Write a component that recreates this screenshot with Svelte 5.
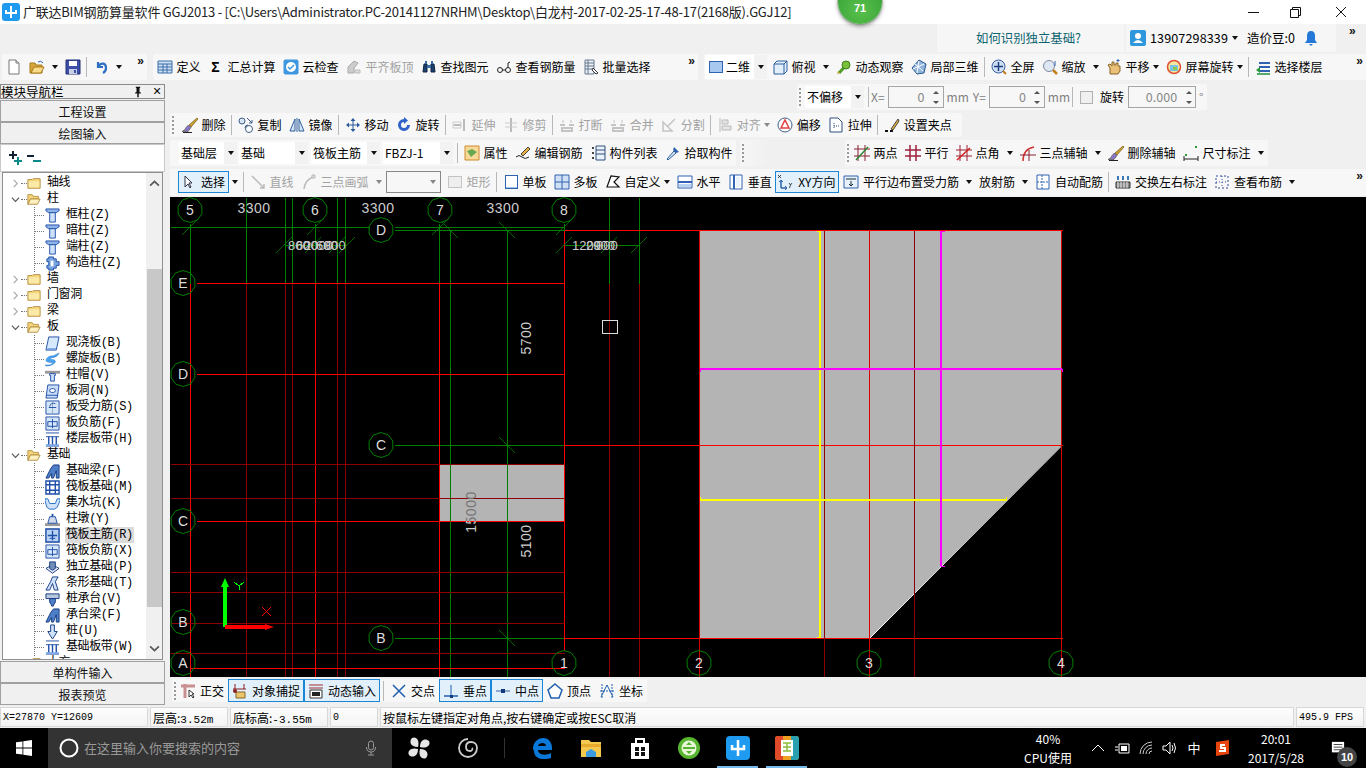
<script>
const I = {
 new:`<path d="M3 1h7l3 3v11H3z" fill="#fff" stroke="#777"/><path d="M10 1v3h3" fill="#ddd" stroke="#777"/>`,
 open:`<path d="M1 4h5l1 2h6v8H1z" fill="#d9a63a" stroke="#a67a1d"/><path d="M2 14l3-6h10l-3 6z" fill="#f8dc8a" stroke="#a67a1d"/><path d="M9 3q3-2 5 1" fill="none" stroke="#2a66b8"/>`,
 save:`<path d="M1 1h14v14H1z" fill="#3d4fa8" stroke="#22306e"/><path d="M4 2h8v5H4z" fill="#fff"/><path d="M4 10h8v5H4z" fill="#c8d0e8"/><path d="M9 11h2v3H9z" fill="#3d4fa8"/>`,
 undo:`<path d="M5 3v5h5M5.500 7.500C8 3 13 4 13 9c0 2-1 4-3 5" fill="none" stroke="#2f6fc4" stroke-width="2.200"/>`,
 def:`<path d="M1 2h14v12H1z" fill="#cfe0f5" stroke="#3a6ea8"/><path d="M1 5h14M1 8h14M1 11h14M6 5v9M10 5v9" stroke="#3a6ea8" fill="none"/>`,
 cloud:`<rect x="0.500" y="0.500" width="15" height="15" rx="2" fill="#3f97e0"/><circle cx="8" cy="8" r="5" fill="#fff"/><path d="M5 8l2 2 4-4" fill="none" stroke="#3f97e0" stroke-width="1.500"/>`,
 flat:`<path d="M2 14V8l6-6 4 2-4 5v5z" fill="#ccc" stroke="#aaa"/><path d="M9 14v-3h5v3z" fill="#ddd" stroke="#bbb"/>`,
 binoc:`<path d="M2 13l1-8h3v8zM10 13V5h3l1 8z" fill="#1d3f6e" stroke="#0f2440"/><path d="M4 2h2v3H4zM10 2h2v3h-2zM6 6h4v3H6z" fill="#3b6ea5"/>`,
 glass:`<circle cx="4" cy="11" r="2.500" fill="none" stroke="#222"/><circle cx="12" cy="11" r="2.500" fill="none" stroke="#222"/><path d="M6.500 11h3M12 8.500V4l2-1" fill="none" stroke="#222"/>`,
 batch:`<path d="M2 1h9v14H2z" fill="#eef2f8" stroke="#67788f"/><path d="M2 4h9M2 7h9M2 10h9M5 1v14" stroke="#67788f"/><path d="M10 9l5 5-2 1-4-4z" fill="#fff" stroke="#333"/>`,
 d2:`<rect x="1.500" y="2.500" width="13" height="11" fill="#a9c8f0" stroke="#2f62b0"/>`,
 top:`<path d="M2 5l3-3h10v10l-3 3H2z" fill="#e2eefa" stroke="#2f5f9e"/><path d="M2 5h10v10M12 5l3-3" fill="none" stroke="#2f5f9e"/>`,
 orbit:`<path d="M3 14L13 3" stroke="#4d9e25" stroke-width="3"/><circle cx="10" cy="6" r="4" fill="#79c13a" stroke="#3d7f1a"/><path d="M1 15l3-1-2-2z" fill="#c8a030"/>`,
 local3:`<path d="M8 1l7 4-2 9-7 1-5-6z" fill="#8fb4dd" stroke="#2d5b8f"/><path d="M4 5l8 7M8 2l-2 12M13 5L2 10" stroke="#fff"/>`,
 full:`<circle cx="7.500" cy="7.500" r="6.500" fill="#cfe0f5" stroke="#3a5f9e"/><path d="M7.500 3v9M3 7.500h9" stroke="#1d3f7e" stroke-width="1.500"/><path d="M12 12l3 3" stroke="#c08020" stroke-width="2"/>`,
 zoom:`<circle cx="7" cy="7" r="5.500" fill="#dfe8f2" stroke="#7d8aa0"/><path d="M11 11l4 4" stroke="#c08020" stroke-width="2.500"/><path d="M13 2v5" stroke="#2f62b0"/>`,
 pan:`<path d="M4 15V9L2 6l2-1 2 2V3h2v3h2V4h2v3h2v5l-2 3z" fill="#e8c078" stroke="#8a6428"/><path d="M12 0v3M10.500 1.500h3" stroke="#2f62b0"/>`,
 rot:`<circle cx="8" cy="8" r="6.500" fill="#f3e6a0" stroke="#e05030" stroke-width="1.500"/><path d="M4 6h8v6H4z" fill="#7cc3e8"/><path d="M7 8h4v3H7z" fill="#8cc850"/>`,
 floor:`<path d="M4 4h11M4 8h11M4 12h11" stroke="#2f62b0" stroke-width="2"/><path d="M1 11l4-3v6z" fill="#2a9a3a"/><path d="M2 15h13" stroke="#1f8f3f" stroke-width="1.500"/>`,
 del:`<path d="M15 1l1 1-7 8-2-2z" fill="#c8a030" stroke="#7a5a18" stroke-width=".700"/><path d="M6.500 8l2.500 2.500-3 4H0q4-2 4-4z" fill="#8a74c8" stroke="#554" stroke-width=".700"/><path d="M1 15.500h9" stroke="#222"/>`,
 copy:`<circle cx="4" cy="4" r="3" fill="#d9e6f4" stroke="#3f5f8a"/><circle cx="11" cy="12" r="3.500" fill="#fff" stroke="#3f5f8a"/><path d="M7 11a3 3 0 0 1 3-3" fill="none" stroke="#3f5f8a"/><path d="M9 1l5 5M14 3v3h-3" fill="none" stroke="#3f5f8a"/>`,
 mirror:`<path d="M6 2v12H1zM10 2v12h5z" fill="#d6e6f7" stroke="#2f5f9e"/><path d="M8 1v14" stroke="#2f5f9e"/>`,
 move:`<path d="M8 1l2.500 3H8.500v3.500H12V5.500L15 8l-3 2.500v-2H8.500V12h2L8 15l-2.500-3h2V8.500H4v2L1 8l3-2.500v2h3.500V4h-2z" fill="#2a5a9a"/>`,
 rotate:`<path d="M8 2a6 6 0 1 0 6 6h-3a3 3 0 1 1-3-3v2l4-3.500L8 0z" fill="#2f62c8"/>`,
 ext:`<path d="M12 2v12M2 8h7" stroke="#bbb" stroke-width="2" fill="none"/><path d="M1 5h8v6H1z" fill="none" stroke="#ccc"/>`,
 trim:`<path d="M8 1v14" stroke="#bbb" stroke-width="2"/><path d="M2 6h12M2 10h12" stroke="#ccc"/>`,
 brk:`<path d="M1 8h5M10 8h5M3 11h10v3H3z" stroke="#c4c4c4" fill="none" stroke-width="2"/><path d="M4 3v3M12 3v3" stroke="#c4c4c4"/>`,
 split:`<path d="M2 14V5l9 9zM14 2l-8 8" fill="none" stroke="#c4c4c4" stroke-width="1.500"/>`,
 align:`<path d="M3 1v14" stroke="#bbb"/><path d="M5 3h6v4H5zM5 9h9v4H5z" fill="#e4e4e4" stroke="#bbb"/>`,
 offs:`<circle cx="8" cy="8" r="7" fill="#fff" stroke="#3f5f8a"/><path d="M8 3l4 8H4z" fill="#fff" stroke="#e04040" stroke-width="1.500"/>`,
 stretch:`<path d="M2 1h8l4 4v10H2z" fill="#fff" stroke="#2f4f7a"/><path d="M6 6v6M6 9h6" stroke="#2f4f7a" stroke-dasharray="1 1"/>`,
 grip2:`<path d="M1 14h3M6 14h3" stroke="#111" stroke-width="2"/><path d="M7 12L14 2l1 2-6 9z" fill="#e8b040" stroke="#444"/>`,
 attr:`<path d="M1 1h14v14H1z" fill="#f9d99a" stroke="#d08a28"/><path d="M3 6l4 6 6-5-5-3z" fill="#6aa84f"/>`,
 edit:`<path d="M1 12q3-3 6 0t7 0" fill="none" stroke="#222"/><path d="M6 9l7-7 2 2-7 7z" fill="#e8b040" stroke="#444"/>`,
 list:`<path d="M2 2h2v2H2zM2 7h2v2H2zM2 12h2v2H2z" fill="#444"/><path d="M6 1h9v14H6z" fill="#eaf2fb" stroke="#2f4f7a"/><path d="M6 5h9M6 9h9" stroke="#2f4f7a"/>`,
 pick:`<path d="M9 6l-7 8 1 1 8-7z" fill="#dbe8f7" stroke="#2f5f9e"/><path d="M9 2l5 5-3 1-3-3z" fill="#2f62b0"/>`,
 two:`<path d="M0 4h16M0 11h16M4 0v16M11 0v16" stroke="#8a2030" /><path d="M2 15L14 2" stroke="#2a8a3a" stroke-width="1.500"/>`,
 para:`<path d="M0 5h16M0 11h16M5 0v16M11 0v16" stroke="#a02040" stroke-width="1.500"/>`,
 angle:`<path d="M0 5h16M0 11h16M4 0v16M11 0v16" stroke="#9a2030"/><path d="M1 15L14 3" stroke="#d02020" stroke-width="1.500"/>`,
 arc3:`<path d="M3 16Q3 4 14 2" fill="none" stroke="#d03030" stroke-width="1.500"/><path d="M0 10h16M9 5v11" stroke="#8a2030"/>`,
 dim:`<path d="M1 14h14M1 11v5M15 11v5" stroke="#222"/><path d="M2 9h2v2H2zM12 1h2v2h-2z" fill="#2a9a3a"/>`,
 sel:`<path d="M5 2v11l3-3 2 4 1-1-2-4h3z" fill="#fff" stroke="#334"/>`,
 line:`<path d="M2 2l12 12M14 10v4h-4" fill="none" stroke="#bbb" stroke-width="1.500"/>`,
 arc:`<path d="M3 15Q4 6 12 3" fill="none" stroke="#bbb" stroke-width="1.500"/><path d="M11 1h3v3h-3z" fill="#ddd" stroke="#bbb"/>`,
 rect:`<rect x="1.500" y="2.500" width="13" height="11" fill="#eee" stroke="#c4c4c4"/>`,
 one:`<rect x="2.500" y="1.500" width="12" height="13" fill="#fff" stroke="#2f62b0"/><path d="M3 13h11v1H3z" fill="#9ec2ee"/>`,
 multi:`<path d="M1 1h14v14H1z" fill="#cfe0f5" stroke="#2f62b0"/><path d="M8 1v14M1 8h14" stroke="#2f62b0"/>`,
 cust:`<path d="M2 13L6 2l8 1-5 5 5 5z" fill="#fff" stroke="#111" stroke-width="1.200"/>`,
 horiz:`<path d="M1 2h14v12H1z" fill="#fff" stroke="#2f62b0"/><path d="M1 8h14" stroke="#2f62b0" stroke-width="2"/><path d="M2 10h12v3H2z" fill="#b8d2f2"/>`,
 vert:`<path d="M2 1h12v14H2z" fill="#fff" stroke="#2f62b0"/><path d="M6 1v14" stroke="#2f62b0" stroke-width="2"/><path d="M8 3h4v10H8z" fill="#eaf2fb"/>`,
 xy:`<path d="M4 7v7M4 14h6" stroke="#2f62b0" stroke-width="1.500"/><path d="M2 8l2-2 2 2M8 12l2 2-2 2" fill="none" stroke="#2f62b0"/><path d="M1 1l3 3M4 1L1 4M12 9l1.500 2L15 9M13.500 11l-1 3" fill="none" stroke="#222" stroke-width=".800"/>`,
 pedge:`<path d="M1 2h14v12H1z" fill="#e8f0fa" stroke="#2f62b0"/><path d="M3 5h10M8 7v5M6 10l2 2 2-2" fill="none" stroke="#133" />`,
 auto:`<path d="M2 1h12v14H2z" fill="#fff" stroke="#2f62b0"/><path d="M7 1v14M2 8h12" stroke="#2f62b0" stroke-dasharray="2 1"/>`,
 swap:`<path d="M2 2h2v4H2zM7 2h2v4H7zM12 2h2v4h-2z" fill="#3a7ab8"/><path d="M1 8h14v6H1z" fill="#8a8a8a" stroke="#333"/><path d="M3 8v6M6 8v6M9 8v6M12 8v6" stroke="#eee"/>`,
 view:`<path d="M2 2h12v12H2z" fill="none" stroke="#334a9a" stroke-dasharray="2 2"/><path d="M8 2v12M2 8h12" stroke="#334a9a" stroke-dasharray="1 2"/>`,
 ortho:`<path d="M1 3h14" stroke="#c89090" stroke-width="3"/><path d="M5 1v14" stroke="#c89090" stroke-width="3"/><path d="M9 7v7l2-2 2 3 1-1-2-3h2z" fill="#fff" stroke="#333"/>`,
 snap:`<path d="M3 1v5M12 1v5M1 6h13" stroke="#8a2020"/><path d="M4 9h9v6H4z" fill="#e8c66a" stroke="#8a6428"/><circle cx="3" cy="8" r="2" fill="#8a2020"/>`,
 dyn:`<path d="M1 2h14M1 5h14" stroke="#a03030"/><path d="M2 7h12v8H2z" fill="#fff" stroke="#333"/><path d="M4 9h8v4H4z" fill="#222"/>`,
 cross:`<path d="M2 2l12 12M14 2L2 14" stroke="#1f5fb0" stroke-width="1.500"/>`,
 perp:`<path d="M1 13h14" stroke="#1f5fb0" stroke-width="1.500"/><path d="M8 2v11" stroke="#1f5fb0"/><path d="M7 12h3v3H7z" fill="#123a80"/>`,
 mid:`<path d="M1 8h14" stroke="#6f8fb8" stroke-width="1.500"/><path d="M6 6h4v4H6z" fill="#123a80"/>`,
 vtx:`<path d="M8 1l7 6-3 8H4L1 7z" fill="#fff" stroke="#1f5fb0" stroke-width="1.500"/>`,
 coord:`<path d="M3 1v14M13 1v14M1 8h14" stroke="#1f5fb0" stroke-dasharray="2 1"/><path d="M8 2l-6 12M8 2l6 12" stroke="#1f5fb0"/>`,
 pin:`<path d="M5 1h6v1l-1 1v5l2 1v1H9v5H7v-5H4V9l2-1V3L5 2z" fill="#111"/>`,
 plus:`<path d="M5 1h2v3h3v2H7v3H5V6H2V4h3z" fill="#123"/><path d="M10 7h2v3h3v2h-3v3h-2v-3H7v-2h3z" fill="#0a8a8a"/>`,
 minus:`<path d="M1 5h7v2H1z" fill="#123"/><path d="M7 10h8v2H7z" fill="#0a8a8a"/>`,
 fclosed:`<path d="M1 4h5l1-1h8v11H1z" fill="#f6d67a" stroke="#b08a3a"/><path d="M2 6h12v7H2z" fill="#fbe9a8"/>`,
 fopen:`<path d="M1 3h5l1 2h6v3H4l-3 6z" fill="#f6d67a" stroke="#b08a3a"/><path d="M1 14l3-6h11l-3 6z" fill="#fdf0bf" stroke="#b08a3a"/>`,
 pil:`<path d="M1 1h14v2l-3 2H4L1 3z" fill="#8fb4e8" stroke="#1f4fa8"/><path d="M5 5h6v10H5z" fill="#cfe2fa" stroke="#1f4fa8"/>`,
 gear:`<path d="M4 1h5v2h3v3h3v4h-3v3H9v2H4v-2H2v-3h2V6H2V3h2z" fill="#7aa5e0" stroke="#1f4fa8"/><path d="M6 5h3v6H6z" fill="#fff"/>`,
 slab:`<path d="M4 1h11l-3 14H1z" fill="#d6e8fb" stroke="#1f4fa8"/><path d="M3 13h9l-.500 2H1.500z" fill="#6f9de0"/>`,
 spiral:`<path d="M1 9q1-5 8-5l6-3q-2 5-8 5-3 1 1 2 5 1 2 4-3 3-9 3l-1-1q8 0 8-2 1-1-4-1-3-1-3-2z" fill="#4aa3f0" stroke="#1f6fc8" stroke-width=".500"/>`,
 cap:`<path d="M0 3h16v3H0z" fill="#999"/><path d="M5 6h6v2h-1v6H6V8H5z" fill="#cfe2fa" stroke="#1f4fa8"/>`,
 hole:`<path d="M3 1h12l-2 14H1z" fill="#c9dcf7" stroke="#1f4fa8"/><rect x="5" y="5" width="6" height="4" rx="2" fill="#fff" stroke="#1f4fa8"/><path d="M2 12h12" stroke="#1f4fa8"/>`,
 gridc:`<path d="M1 1h14v14H1z" fill="#d6e6f9" stroke="#1f4fa8"/><path d="M8 1v14" stroke="#9ab" /><path d="M4 8h8M11 4a4 4 0 0 0-6 3" fill="none" stroke="#1f4fa8"/>`,
 gridn:`<path d="M1 1h14v14H1z" fill="#d6e6f9" stroke="#1f4fa8"/><path d="M8 3v10M3 6h10v5H3z" fill="none" stroke="#1f4fa8"/>`,
 band:`<path d="M1 1h14M1 15h14M1 5h14" stroke="#1f4fa8"/><path d="M4 5v10M8 5v10M12 5v10" stroke="#1f4fa8" stroke-width="1.500"/><path d="M1 13h14v2H1z" fill="#7fa8e8"/>`,
 beam:`<path d="M1 15l5-10 3-4h6v14h-3V7l-3 8H7V10l-3 5z" fill="#4f7fc8" stroke="#123a80"/>`,
 raft:`<path d="M1 1h14v14H1z" fill="#fff" stroke="#1f4fa8" stroke-width="1.500"/><path d="M1 5h14M1 11h14M5 1v14M11 1v14" stroke="#1f4fa8" stroke-width="1.500"/>`,
 pit:`<path d="M0 3h3l2 5h6l2-5h3v2l-3 7-3 2H5l-3-2-2-7z" fill="#cfe2fa" stroke="#1f6fc8"/>`,
 pier:`<path d="M0 12h16v3H0z" fill="#999"/><path d="M5 5h6l2 7H3z" fill="#cfd9e8" stroke="#1f4fa8"/><path d="M7 2h2v3H7z" fill="#1f4fa8"/>`,
 raftm:`<path d="M1 1h14v14H1z" fill="#b9d2f3" stroke="#1f4fa8" stroke-width="1.500"/><path d="M8 3v10M3 8h10" stroke="#1f4fa8" stroke-width="1.500"/><path d="M5 11h6" stroke="#1f4fa8"/>`,
 iso:`<path d="M1 9l7-4 7 4-7 5z" fill="#eef" stroke="#123a80"/><path d="M5 2h6v7l-3 2-3-2z" fill="#6f8fb8" stroke="#123a80"/>`,
 strip:`<path d="M1 15l5-9 2-5h6l-3 5 3 9H10L8 8l-3 7z" fill="#cfe2fa" stroke="#123a80"/>`,
 pcap:`<path d="M1 2h14v5H1z" fill="#b9c8dd" stroke="#123a80"/><path d="M5 7h6v4l-2 3v1H7v-1l-2-3z" fill="#4f7fc8" stroke="#123a80"/>`,
 pile:`<path d="M6 1h4v7h3l-3 5-2 3-2-3-3-5h3z" fill="#cfe2fa" stroke="#123a80"/>`
};
const f = (i,t='',o='') => ({i,t,o});
const bar1 = [f('new'),f('open','', 'd'),f('save')];
const bar2 = [f('def','定义'),f('Σ','汇总计算'),f('cloud','云检查'),f('flat','平齐板顶','x'),f('binoc','查找图元'),f('glass','查看钢筋量'),f('batch','批量选择')];
const bar3 = [f('top','俯视','d'),f('orbit','动态观察'),f('local3','局部三维'),'|',f('full','全屏'),f('zoom','缩放','d'),f('pan','平移','dk'),f('rot','屏幕旋转','dk'),'|',f('floor','选择楼层')];
const edit = [f('del','删除'),'|',f('copy','复制'),f('mirror','镜像'),'|',f('move','移动'),f('rotate','旋转'),'|',f('ext','延伸','x'),f('trim','修剪','x'),'|',f('brk','打断','x'),f('brk','合并','x'),f('split','分割','x'),'|',f('align','对齐','xdk'),f('offs','偏移'),f('stretch','拉伸'),'|',f('grip2','设置夹点')];
const props = [f('attr','属性'),f('edit','编辑钢筋'),f('list','构件列表'),f('pick','拾取构件')];
const axes = [f('two','两点'),f('para','平行'),f('angle','点角','d'),f('arc3','三点辅轴','d'),f('del','删除辅轴'),f('dim','尺寸标注','d')];
const draw1 = [f('line','直线','x'),f('arc','三点画弧','xd')];
const draw2 = [f('one','单板'),f('multi','多板'),f('cust','自定义','dk'),f('horiz','水平'),f('vert','垂直'),f('xy','XY方向','s'),f('pedge','平行边布置受力筋','d'),f('','放射筋','d'),f('auto','自动配筋'),'|',f('swap','交换左右标注'),f('view','查看布筋','d')];
const snaps = [f('ortho','正交'),f('snap','对象捕捉','s'),f('dyn','动态输入','s'),'|',f('cross','交点'),f('perp','垂点','s'),f('mid','中点','s'),f('vtx','顶点'),f('coord','坐标')];
const tree = [
 ['c','轴线'],['o','柱'],['pil','框柱(Z)'],['pil','暗柱(Z)'],['pil','端柱(Z)'],['gear','构造柱(Z)'],['c','墙'],['c','门窗洞'],['c','梁'],['o','板'],
 ['slab','现浇板(B)'],['spiral','螺旋板(B)'],['cap','柱帽(V)'],['hole','板洞(N)'],['gridc','板受力筋(S)'],['gridn','板负筋(F)'],['band','楼层板带(H)'],
 ['o','基础'],['beam','基础梁(F)'],['raft','筏板基础(M)'],['pit','集水坑(K)'],['pier','柱墩(Y)'],['raftm','筏板主筋(R)','s'],['gridn','筏板负筋(X)'],['iso','独立基础(P)'],['strip','条形基础(T)'],['pcap','桩承台(V)'],['beam','承台梁(F)'],['pile','桩(U)'],['band','基础板带(W)'],['c','土方']
];
const BR='#f00', DR='#8c0000', GR='#008000';
const L = [];
const v=(x,a,b,c)=>L.push([x,a,x,b,c]); const h=(y,a,b,c)=>L.push([a,y,b,y,c]);
[[190,223],[246,197],[285,197],[292,197],[315,223],[337,197],[345,197],[439,223],[609,197],[639,197]].forEach(([x,a])=>v(x,a,283,GR));
v(564,223,230,GR); v(450,230,677,GR); v(507,230,677,GR);
h(227,170,369,GR); h(227,394,564,GR); h(230,394,564,GR); h(245,285,345,GR); h(245,564,639,GR); h(445,394,564,GR); h(638,394,564,GR);
[246,285,292,337,345,609,639].forEach(x=>v(x,283,677,DR));
[190,315,439].forEach(x=>v(x,283,677,BR)); v(564,230,650,BR);
[[283,196],[374,196],[521,196],[668,190]].forEach(([y,a])=>h(y,a,564,BR));
[464,498,572,592,623,653].forEach(y=>h(y,170,564,DR));
h(230,564,1062,BR); h(445,564,1062,BR); h(638,564,1062,BR);
[699,869,1061].forEach(x=>v(x,230,677,'#d80000')); [824,914].forEach(x=>v(x,230,677,DR));
const T=[[190,227,1],[315,227,1],[440,227,1],[564,227,1],[450,230,-1],[507,230,-1],[507,445,-1],[507,638,-1],[284,245,1],[313,245,1],[337,245,1],[347,245,1],[564,245,1],[609,245,1],[639,245,1]];
const C=[[190,210,'5'],[315,210,'6'],[440,210,'7'],[564,210,'8'],[381,230,'D'],[183,283,'E'],[183,374,'D'],[183,521,'C'],[183,622,'B'],[183,663,'A'],[381,445,'C'],[381,638,'B'],[564,663,'1'],[699,663,'2'],[869,663,'3'],[1061,663,'4']];
const poly=(x,y)=>Array.from({length:10},(_,i)=>{const a=i*Math.PI/5+.3;return `${(x+12.5*Math.cos(a)).toFixed(1)},${(y+12.5*Math.sin(a)).toFixed(1)}`}).join(' ');
const dims=[[254,213,'3300'],[378,213,'3300'],[503,213,'3300']];
const over=[[288,'800'],[296,'600'],[304,'2000'],[316,'600'],[324,'800'],[572,'1200'],[586,'2900'],[596,'000']];
</script>

{#snippet ic(name, cls='')}
 {#if name==='Σ'}<b class="sig">Σ</b>
 {:else if name}<svg class={'ico '+cls} viewBox="0 0 16 16">{@html I[name]}</svg>{/if}
{/snippet}
{#snippet tool(it)}
 {#if it==='|'}<span class="sep"></span>
 {:else}
 <div class="tool" class:dis={it.o.includes('x')} class:sel={it.o.includes('s')} class:tight={it.o.includes('k')}>
  {@render ic(it.i)}
  {#if it.t}<span class="lbl">{it.t}</span>{/if}
  {#if it.o.includes('d')}<i class="drop"></i>{/if}
 </div>
 {/if}
{/snippet}
{#snippet spin(val, cls)}
 <div class={'spin '+cls}><span>{val}</span><div class="updown"><i class="up"></i><i class="down"></i></div></div>
{/snippet}
{#snippet combo(t, cls)}
 <div class={'combo '+cls}><span>{t}</span><div class="cbtn"><i class="drop"></i></div></div>
{/snippet}

<div class="app">
 <header class="title">
  <svg class="logo" viewBox="0 0 18 18"><rect width="18" height="18" rx="3" fill="#1e9af0"/><path d="M9 3v12M4 7v3h4M14 7v3h-4" fill="none" stroke="#fff" stroke-width="2"/></svg>
  <span class="ttext">广联达BIM钢筋算量软件 GGJ2013 - [C:\Users\Administrator.PC-20141127NRHM\Desktop\白龙村-2017-02-25-17-48-17(2168版).GGJ12]</span>
  <div class="winctl">
   <svg viewBox="0 0 46 20"><path d="M22 10.500h11" stroke="#111"/></svg>
   <svg viewBox="0 0 46 20"><path d="M18.500 7.500h8v8h-8zM20.500 7.500v-2h8v8h-2" fill="none" stroke="#111"/></svg>
   <svg viewBox="0 0 46 20"><path d="M18 5l10 10M28 5L18 15" stroke="#111"/></svg>
  </div>
 </header>
 <div class="badge">71</div>

 <div class="inforow">
  <div class="ask">如何识别独立基础?</div>
  <div class="user">
   <svg class="ico" viewBox="0 0 16 16"><rect width="16" height="16" rx="2" fill="#2f97dc"/><circle cx="8" cy="6" r="3" fill="#fff"/><path d="M3 13q5-6 10 0z" fill="#fff"/></svg>
   <span class="phone">13907298339</span><i class="drop"></i><span class="dou">造价豆:0</span>
   <svg class="ico bell" viewBox="0 0 16 16"><path d="M8 1q4 0 4 5v4l2 3H2l2-3V6q0-5 4-5z" fill="#2479d8"/><path d="M6 14h4l-2 2z" fill="#2479d8"/></svg>
  </div>
  <b class="more">»</b>
 </div>

 <div class="row1">
  <div class="bar b1">
   {@render tool(bar1[0])}{@render tool(bar1[1])}{@render tool(bar1[2])}<span class="sep"></span>{@render tool(f('undo','','d'))}<b class="more">»</b>
  </div>
  <div class="bar b2">
   {#each bar2 as it}{@render tool(it)}{/each}<b class="more">»</b>
  </div>
  <div class="bar b3">
   <div class="combo d2box"><div class="tool">{@render ic('d2')}<span class="lbl">二维</span></div><div class="cbtn"><i class="drop"></i></div></div>
   {#each bar3 as it}{@render tool(it)}{/each}<b class="more">»</b>
  </div>
 </div>

 <div class="main">
  <aside class="side">
   <div class="navhead"><span>模块导航栏</span><div class="navctl">{@render ic('pin','pin')}<span class="navx">×</span></div></div>
   <button class="navbtn">工程设置</button>
   <button class="navbtn">绘图输入</button>
   <div class="treetools">{@render ic('plus')}{@render ic('minus')}</div>
   <div class="treebox">
    <div class="tree">
     {#each tree as [k,t,s]}
      {#if k==='c'||k==='o'}
       <div class="node top">
        <svg class="chev" viewBox="0 0 10 10"><path d={k==='c'?'M3 1l4 4-4 4':'M1 3l4 4 4-4'} fill="none" stroke={k==='c'?'#aaa':'#555'} stroke-width="1.300"/></svg>
        <span class="dots d1"></span>{@render ic(k==='c'?'fclosed':'fopen')}<span class="tl">{t}</span>
       </div>
      {:else}
       <div class="node leaf" class:cur={s}><span class="dots d2"></span>{@render ic(k)}<span class="tl">{t}</span></div>
      {/if}
     {/each}
    </div>
    <div class="scroll">
     <svg class="sa" viewBox="0 0 10 10"><path d="M1 7l4-4 4 4" fill="none" stroke="#555" stroke-width="1.500"/></svg>
     <div class="thumb"></div>
     <svg class="sa" viewBox="0 0 10 10"><path d="M1 3l4 4 4-4" fill="none" stroke="#555" stroke-width="1.500"/></svg>
    </div>
   </div>
   <button class="navbtn nb2">单构件输入</button>
   <button class="navbtn">报表预览</button>
  </aside>

  <section class="work">
   <div class="offsetrow">
    <div class="bar offs">
     <span class="grip"></span>
     {@render combo('不偏移','c-off')}
     <span class="sep"></span>
     <span class="dimlbl x1">X=</span>{@render spin('0','s1')}<span class="dimlbl">mm</span>
     <span class="dimlbl y1">Y=</span>{@render spin('0','s1')}<span class="dimlbl">mm</span>
     <span class="sep"></span><span class="chk"></span><span class="rot">旋转</span>
     {@render spin('0.000','s2')}<span class="dimlbl">°</span>
    </div>
   </div>
   <div class="bar editrow"><span class="grip"></span>{#each edit as it}{@render tool(it)}{/each}</div>
   <div class="comborow">
    <div class="bar cb1">
     {@render combo('基础层','c1')}{@render combo('基础','c2')}{@render combo('筏板主筋','c3')}{@render combo('FBZJ-1','c4')}
     <span class="sep"></span>{#each props as it}{@render tool(it)}{/each}
    </div>
    <div class="bar blank"><span class="grip"></span></div>
    <div class="bar cb2"><span class="grip"></span>{#each axes as it}{@render tool(it)}{/each}</div>
   </div>
   <div class="bar drawrow">
    {@render tool(f('sel','选择','s'))}<i class="drop sd"></i><span class="sep"></span>
    {#each draw1 as it}{@render tool(it)}{/each}
    <div class="dbox"><i class="drop grey"></i></div>
    {@render tool(f('rect','矩形','x'))}<span class="sep"></span>
    {#each draw2 as it}{@render tool(it)}{/each}
    <b class="more">»</b>
   </div>

   <svg class="canvas" viewBox="170 197 1196 480">
    <defs><linearGradient id="tg" gradientUnits="userSpaceOnUse" x1="0" y1="0" x2="48" y2="0"><stop offset="0.3125" stop-color="#ccc"/><stop offset="0.3125" stop-color="#757575"/></linearGradient></defs>
    <rect x="170" y="197" width="1196" height="480" fill="#000"/>
    <polygon points="699,230 1061,230 1061,446 870,638 699,638" fill="#b4b4b4"/>
    <rect x="439" y="464" width="125" height="57" fill="#b4b4b4"/>
    <path d="M1061 446.500L870 638" stroke="#fff"/>
    <g class="crisp">
     {#each L as [a,b,c,d,col]}<line x1={a+.5} y1={b+.5} x2={c+.5} y2={d+.5} stroke={col}/>{/each}
     <path d="M820 231v407M700 500h307" stroke="#ff0" fill="none" stroke-width="2"/>
     <path d="M817 231.500h3M817 637.500h3M700.500 497v3M1006.500 497v3" stroke="#ff0" fill="none"/>
     <path d="M700 369h362M941 231v335" stroke="#f0f" fill="none" stroke-width="2"/>
     <path d="M941 231.500h4M941 566.500h4M700.500 369v3M1062.500 369v3" stroke="#f0f" fill="none"/>
     <path d="M602.500 320.500h15v13h-15z" fill="none" stroke="#ddd"/>
    </g>
    {#each T as [x,y,s]}<line x1={x-8} y1={y+8*s} x2={x+8} y2={y-8*s} stroke={GR} stroke-width=".8"/>{/each}
    {#each C as [x,y,t]}<polygon points={poly(x,y)} fill="none" stroke={GR}/><text class="ct" x={x} y={y+5}>{t}</text>{/each}
    {#each dims as [x,y,t]}<text class="dt" x={x} y={y}>{t}</text>{/each}
    {#each over as [x,t]}<text class="ot" x={x} y="250">{t}</text>{/each}
    <text class="dt" transform="translate(531 338) rotate(-90)">5700</text>
    <text class="dt" transform="translate(531 541) rotate(-90)">5100</text>
    <text class="dt mid" transform="translate(476 512) rotate(-90) translate(-24 0)" x="24">15000</text>
    <path d="M225 578l4 9h-2v40h-4v-40h-2z" fill="#0f0"/>
    <path d="M225 625h40v-1l9 3-9 3v-1h-40z" fill="#f00"/>
    <g class="crisp">
     <path d="M234 582l5 4 5-4M239 586v4" fill="none" stroke="#0f0"/>
     <path d="M262 607l9 9M271 607l-9 9" stroke="#f00"/>
    </g>
   </svg>

   <div class="snaprow"><div class="bar snapbar"><span class="grip"></span>{#each snaps as it}{@render tool(it)}{/each}</div></div>
  </section>
 </div>

 <footer class="status">
  <div class="st s-a mono">X=27870 Y=12609</div>
  <div class="st s-b">层高:<span class="mono m2">3.52m</span></div>
  <div class="st s-c">底标高:<span class="mono m2">-3.55m</span></div>
  <div class="st s-d mono">0</div>
  <div class="st s-e">按鼠标左键指定对角点,按右键确定或按ESC取消</div>
  <div class="st s-f mono">495.9 FPS</div>
 </footer>

 <nav class="task">
  <div class="start"><svg viewBox="0 0 16 16"><path d="M0 2.300l6.500-.9v6.200H0zM7.300 1.300L16 0v7.600H7.300zM0 8.400h6.500v6.200L0 13.700zM7.300 8.400H16V16l-8.700-1.200z" fill="#fff"/></svg></div>
  <div class="search">
   <svg class="cortana" viewBox="0 0 20 20"><circle cx="10" cy="10" r="8.500" fill="none" stroke="#fff" stroke-width="2"/></svg>
   <span>在这里输入你要搜索的内容</span>
   <svg class="mic" viewBox="0 0 16 16"><rect x="5.500" y="1" width="5" height="9" rx="2.500" fill="none" stroke="#999"/><path d="M3.500 7q0 5 4.500 5t4.500-5M8 12v3M5 15h6" fill="none" stroke="#999"/></svg>
  </div>
  <div class="cell"><svg viewBox="0 0 24 24"><path d="M11 11C3 11 2 5 5 2c4-2 8 2 6 9zM13 11c0-8 6-9 9-6 2 4-2 8-9 6zM13 13c8 0 9 6 6 9-4 2-8-2-6-9zM11 13c0 8-6 9-9 6-2-4 2-8 9-6z" fill="#e6e6e6"/></svg></div>
  <div class="cell"><svg viewBox="0 0 24 24"><path d="M12 3a9 9 0 1 0 9 9c0-4-3-6-6-6s-5 2-5 5 2 4 4 4 3-2 2-3" fill="none" stroke="#ccc" stroke-width="1.800"/></svg></div>
  <span class="tsep"></span>
  <div class="cell"><svg viewBox="0 0 24 24"><path d="M3 13C3 6 8 2 13 2c6 0 9 5 9 10v2H8c0 5 8 6 13 3v5c-6 2-17 2-17-7zM8 10h8c0-4-7-4-8 0z" fill="#0a78d8"/></svg></div>
  <div class="cell"><svg viewBox="0 0 24 24"><path d="M2 4h8l2 2h10v15H2z" fill="#f5c94e"/><path d="M2 8h20v3H2z" fill="#e6ab2e"/><path d="M7 21v-5l5-3 5 3v5z" fill="#3c9ae0"/></svg></div>
  <div class="cell"><svg viewBox="0 0 24 24"><path d="M3 7h18v16H3z" fill="#fff"/><path d="M8 7V3h8v4" fill="none" stroke="#fff" stroke-width="2"/><path d="M7 11h4v4H7zM13 11h4v4h-4zM7 16h4v4H7zM13 16h4v4h-4z" fill="#111"/></svg></div>
  <div class="cell"><svg viewBox="0 0 24 24"><circle cx="12" cy="12" r="11" fill="#57b52f"/><circle cx="12" cy="12" r="7.500" fill="#e8f5d8"/><path d="M6 12h12" stroke="#57b52f" stroke-width="2"/><path d="M9 9l3-3 3 3zM9 15l3 3 3-3z" fill="#57b52f"/></svg></div>
  <div class="cell on"><svg viewBox="0 0 24 24"><rect width="24" height="24" rx="4" fill="#1e9af0"/><path d="M12 4v16M6 9v4h5M18 9v4h-5" fill="none" stroke="#fff" stroke-width="2.500"/></svg></div>
  <div class="cell on"><svg viewBox="0 0 24 24"><rect width="24" height="24" rx="3" fill="#f0a020"/><path d="M0 3a3 3 0 0 1 3-3h5v24H3a3 3 0 0 1-3-3z" fill="#e04a2a"/><path d="M16 0h5a3 3 0 0 1 3 3v18a3 3 0 0 1-3 3h-5z" fill="#2a9fb0"/><path d="M6 4h12v16H6z" fill="#fff"/><path d="M8 7h8M8 11h8M8 15h8M12 7v8" stroke="#8bbf3a" stroke-width="1.500"/></svg></div>
  <div class="tray">
   <div class="cpu"><span>40%</span><span>CPU使用</span></div>
   <div class="tc"><svg viewBox="0 0 16 16"><path d="M2 11l6-6 6 6" fill="none" stroke="#fff"/></svg></div>
   <div class="tc"><svg viewBox="0 0 16 16"><path d="M5 4h10v9H5z" fill="none" stroke="#fff"/><path d="M7 6h6v5H7z" fill="#fff"/><path d="M1 7h3M1 10h3" stroke="#fff"/></svg></div>
   <div class="tc"><svg viewBox="0 0 16 16"><path d="M2 14a12 12 0 0 1 12-12M5 14a9 9 0 0 1 9-9M8 14a6 6 0 0 1 6-6M11 14a3 3 0 0 1 3-3" fill="none" stroke="#ccc"/></svg></div>
   <div class="tc"><svg viewBox="0 0 16 16"><path d="M1 6h3l4-4v12l-4-4H1z" fill="none" stroke="#fff"/><path d="M10 5q2 3 0 6M12 3q3 5 0 10" fill="none" stroke="#fff"/></svg></div>
   <div class="tc ime">中</div>
   <div class="tc sogou"><svg viewBox="0 0 16 16"><path d="M2 2l13-2v14L2 16z" fill="#e8440e"/><path d="M11 5H7v3h4v3H5" fill="none" stroke="#fff" stroke-width="2"/></svg></div>
   <div class="clock"><span>20:01</span><span>2017/5/28</span></div>
   <div class="notif"><svg viewBox="0 0 16 16"><path d="M1 1h14v12H1z" fill="#fff"/><path d="M3 4h10M3 7h10M3 10h10" stroke="#333"/></svg><span class="nbadge">10</span></div>
  </div>
 </nav>
</div>

<style>
:global(body){margin:0;background:#f0f0f0;}
.app{width:1366px;height:768px;overflow:hidden;position:relative;display:flex;flex-direction:column;background:#f0f0f0;font:12px/16px "Noto Sans CJK SC","Noto Sans",sans-serif;color:#000;}
.title{height:24px;background:#fff;display:flex;align-items:center;flex:none;}
.logo{width:18px;height:18px;margin:0 3px 0 2px;flex:none;}
.ttext{font-size:13px;white-space:nowrap;letter-spacing:-.23px;color:#222;}
.winctl{margin-left:auto;display:flex;width:140px;}
.winctl svg{width:46px;height:20px;}
.badge{position:absolute;left:838px;top:-20px;width:44px;height:44px;border-radius:50%;background:radial-gradient(circle at 50% 70%,#58c04a,#2f9a34);box-shadow:0 2px 4px rgba(0,0,0,.45),0 0 0 1px #cfe8cf;color:#fff;font:bold 11px/12px "Liberation Sans",sans-serif;display:flex;align-items:flex-end;justify-content:center;padding:0 0 10px;box-sizing:border-box;}
.inforow{height:28px;display:flex;align-items:center;flex:none;padding-left:937px;position:relative;box-sizing:border-box;}
.ask{width:187px;height:28px;background:#f6f6f6;color:#0b6470;font-size:12.400px;line-height:28px;text-align:center;box-sizing:border-box;padding-right:4px;flex:none;}
.user{margin-left:2px;height:28px;width:210px;background:#f6f6f6;display:flex;align-items:center;padding-left:4px;box-sizing:border-box;gap:4px;flex:none;}
.phone{font-size:12.600px;letter-spacing:.1px;}
.dou{margin-left:5px;font-size:12.500px;}
.bell{margin-left:4px;}
.more{font:bold 12px/10px "Liberation Sans",sans-serif;align-self:flex-start;padding-top:2px;margin-left:auto;margin-right:3px;color:#111;}
.inforow .more{margin-left:13px;}
.row1{display:flex;height:26px;margin:2px 0 4px;flex:none;}
.bar{display:flex;align-items:center;background:#f7f7f7;border-radius:2px;box-sizing:border-box;}
.b1{width:145px;margin-left:2px;padding-left:0;}
.b2{width:545px;margin-left:6px;padding-left:0;}
.b3{flex:1;margin-left:6px;padding-left:1px;}
.tool{display:flex;align-items:center;height:22px;padding:0 2.500px;gap:4px;white-space:nowrap;box-sizing:border-box;border:1px solid transparent;flex:none;}
.tool.sel{background:#e2f0fb;border-color:#1b86d6;}
.tool.dis{color:#a2a2a2;}
.tool .drop{margin-left:3px;}
.tool.tight .drop{margin-left:-1px;}
.ico{width:16px;height:16px;flex:none;display:block;}
.sig{width:16px;text-align:center;font:bold 14px/16px "Liberation Sans",sans-serif;flex:none;}
.drop{display:block;width:0;height:0;border:3px solid transparent;border-top:4px solid #111;border-bottom:0;flex:none;}
.drop.grey{border-top-color:#888;}
.dis .drop{border-top-color:#888;}
.sep{width:1px;height:20px;background:#b8b8b8;margin:0 2px;flex:none;}
.grip{width:0;height:18px;border-left:2px dotted #999;margin:0 4px 0 2px;flex:none;}
.main{display:flex;height:621px;flex:none;}
.side{width:165px;margin-right:5px;flex:none;display:flex;flex-direction:column;}
.navhead{height:15px;box-sizing:border-box;border:1px solid #8a8a8a;display:flex;align-items:center;justify-content:space-between;font-size:12.500px;line-height:13px;white-space:nowrap;margin-bottom:1px;flex:none;}
.navctl{display:flex;align-items:center;gap:6px;}
.pin{width:12px;height:12px;}
.navx{width:14px;font:14px/13px "Liberation Sans",sans-serif;text-align:center;}
.navbtn{display:block;width:165px;height:22px;background:#f0f0f0;border:1px solid #a0a0a0;margin:0;padding:2px 0 0;font:12px/18px "Noto Sans CJK SC",sans-serif;color:#111;flex:none;}
.treetools{height:28px;display:flex;align-items:center;gap:3px;padding-left:6px;background:#fff;border:1px solid #c8c8c8;box-sizing:border-box;flex:none;}
.treebox{height:488px;margin:0 2px;border:1px solid #8f8f8f;background:#fff;display:flex;position:relative;box-sizing:border-box;flex:none;}
.tree{flex:1;overflow:hidden;padding-top:2px;}
.node{height:16px;display:flex;align-items:center;position:relative;font:12px/16px "Liberation Mono","Noto Sans CJK SC",monospace;white-space:nowrap;}
.top{padding-left:24px;}
.top .ico{width:14px;height:14px;}
.chev{position:absolute;left:8px;top:4px;width:9px;height:9px;}
.leaf{padding-left:42px;}
.leaf .ico{width:15px;height:15px;}
.tl{margin-left:5px;letter-spacing:-.4px;padding:0 1px;}
.cur .tl{background:#dcdcdc;}
.cur .ico{background:#e4e4e4;}
.dots{position:absolute;height:0;border-top:1px dotted #777;top:8px;}
.d1{left:18px;width:6px;}
.d2{left:32px;width:9px;}
.d2::before{content:"";position:absolute;left:-1px;top:-9px;height:17px;border-left:1px dotted #777;}
.scroll{width:16px;background:#f0f0f0;display:flex;flex-direction:column;align-items:center;flex:none;}
.sa{width:11px;height:11px;margin:5px 0;flex:none;}
.thumb{width:15px;height:338px;background:#c8c8c8;margin-top:75px;margin-bottom:auto;}
.nb2{margin-top:1px;}
.work{flex:1;min-width:0;display:flex;flex-direction:column;}
.offsetrow{height:26px;display:flex;margin-bottom:3px;padding-left:627px;flex:none;}
.offs{width:410px;height:26px;}
.combo{display:flex;align-items:center;background:#fff;height:22px;flex:none;margin-right:2px;}
.combo>span{flex:1;padding-left:2px;white-space:nowrap;}
.cbtn{width:13px;height:100%;background:#f2f2f2;display:flex;align-items:center;justify-content:center;margin-left:auto;flex:none;}
.c-off{width:59px;}
.d2box{width:62px;margin-right:1px;height:24px;}
.d2box .tool{padding:0 2px 0 3px;margin:0;border:0;gap:2px;}
.dimlbl{color:#808080;font-size:12px;flex:none;}
.x1{margin-left:0;margin-right:3px;}
.y1{margin-left:4px;margin-right:3px;}
.spin{height:22px;border:1px solid #a5a5a5;display:flex;align-items:center;justify-content:flex-end;box-sizing:border-box;color:#888;font-size:12.500px;margin-right:3px;flex:none;}
.s1{width:56px;}
.s2{width:68px;}
.spin>span{padding-right:5px;}
.updown{width:13px;height:100%;display:flex;flex-direction:column;align-items:center;justify-content:space-around;}
.up,.down{display:block;width:0;height:0;border:3px solid transparent;}
.up{border-bottom:3px solid #555;border-top:0;}
.down{border-top:3px solid #555;border-bottom:0;}
.chk{width:11px;height:11px;border:1px solid #b0b0b0;background:#f0f0f0;margin:0 7px 0 5px;flex:none;}
.rot{margin-right:4px;white-space:nowrap;flex:none;}
.editrow{height:24px;width:792px;margin-bottom:3px;flex:none;}
.comborow{display:flex;height:26px;margin-bottom:3px;flex:none;}
.cb1{width:566px;padding-left:9px;}
.c1{width:58px;margin-right:2px;}.c2{width:69px;margin-right:3px;}.c3{width:69px;margin-right:3px;}.c4{width:70px;margin-right:2px;}
.blank{width:30px;margin-left:4px;background:linear-gradient(90deg,#f6f6f6,#f0f0f0);}
.cb2{width:423px;margin-left:75px;}
.cb2 .grip{margin-right:1px;}
.drawrow{height:27px;width:1196px;padding:0 0 1px 8px;margin-bottom:1px;flex:none;}
.drawrow .sel{padding:0 3px 0 1px;gap:5px;}
.sd{margin:0 3px 0 3px;}
.dbox{width:55px;height:22px;border:1px solid #888;background:#f7f7f7;display:flex;align-items:center;justify-content:flex-end;padding-right:4px;margin:0 2px 0 1px;box-sizing:border-box;flex:none;}
.canvas{display:block;width:1196px;height:480px;flex:none;}
.crisp{shape-rendering:crispEdges;}
.ct{font:14px "Liberation Sans",sans-serif;fill:#ddd;text-anchor:middle;}
.dt{font:14px "Liberation Sans",sans-serif;fill:#ccc;text-anchor:middle;letter-spacing:.5px;}
.dt.mid{fill:url(#tg);}
.ot{font:13px "Liberation Sans",sans-serif;fill:#ccc;}
.snaprow{height:28px;display:flex;align-items:flex-end;padding-bottom:3px;box-sizing:border-box;flex:none;}
.snapbar{height:23px;width:475px;margin-left:2px;}
.snapbar .tool{height:23px;padding:0 3px;}
.snapbar .grip{margin-right:0;}
.snapbar .sep{margin:0 3px;}
.status{height:21px;margin-top:2px;display:flex;gap:2px;flex:none;}
.st{height:20px;border:1px solid #d8d8d8;background:linear-gradient(#fdfdfd,#f3f3f3);line-height:19px;padding-left:2px;box-sizing:border-box;white-space:nowrap;overflow:hidden;flex:none;}
.mono{font:10px/19px "Liberation Mono",monospace;}
.m2{font-size:11px;}
.s-a{width:148px;}.s-b{width:78px;}.s-c{width:98px;}.s-d{width:48px;}.s-e{width:914px;}.s-f{width:68px;}
.task{height:40px;background:#000;display:flex;align-items:center;color:#fff;flex:none;}
.start{width:48px;height:40px;display:flex;align-items:center;justify-content:center;flex:none;}
.start svg{width:16px;height:16px;}
.search{width:344px;height:40px;background:#333;display:flex;align-items:center;padding-left:11px;box-sizing:border-box;color:#999;font-size:13px;flex:none;}
.cortana{width:20px;height:20px;margin-right:5px;}
.mic{width:16px;height:16px;margin-left:auto;margin-right:13px;}
.cell{width:49px;height:40px;display:flex;align-items:center;justify-content:center;position:relative;flex:none;margin-left:0;}
.cell svg{width:24px;height:24px;}
.search+.cell{margin-left:2px;}
.cell.on::after{content:"";position:absolute;left:4px;right:4px;bottom:0;height:2px;background:#76b9ed;}
.tsep{width:1px;height:20px;background:#333;margin:0 12px;flex:none;}
.tray{margin-left:auto;display:flex;align-items:center;height:40px;flex:none;}
.cpu,.clock{display:flex;flex-direction:column;align-items:center;line-height:19px;font-size:12px;}
.cpu{width:76px;}
.clock{width:72px;margin-left:6px;}
.tc{width:24px;height:24px;display:flex;align-items:center;justify-content:center;flex:none;}
.tc svg{width:16px;height:16px;}
.ime{font-size:13px;}
.sogou{margin-left:4px;}
.notif{width:54px;height:40px;position:relative;flex:none;}
.notif svg{position:absolute;left:18px;top:13px;width:16px;height:14px;}
.nbadge{position:absolute;left:25px;top:19px;width:20px;height:20px;border-radius:50%;background:#444;font:bold 11px/20px "Liberation Sans",sans-serif;text-align:center;}
</style>
